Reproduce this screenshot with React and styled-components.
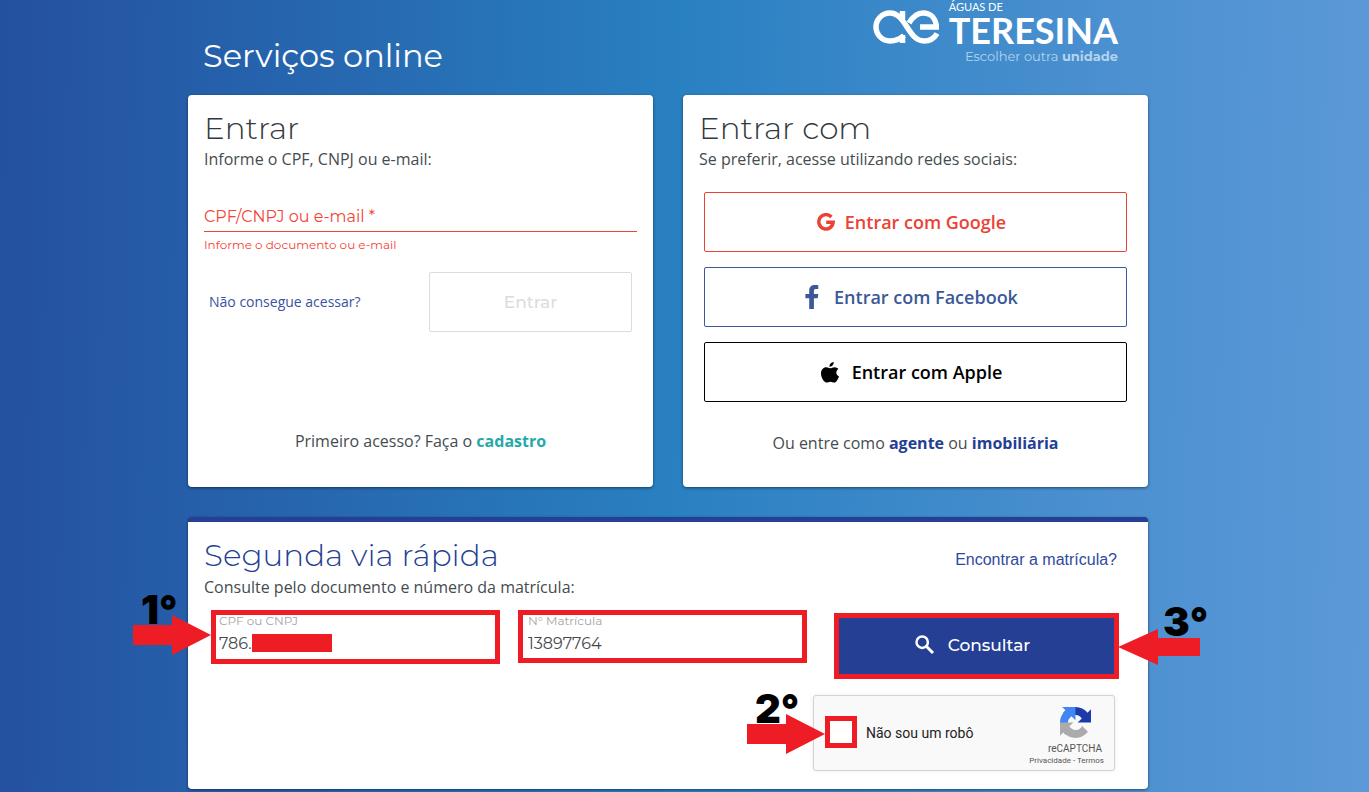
import React from 'react';
import styled, { createGlobalStyle, css } from 'styled-components';

const Global = createGlobalStyle`
  * { box-sizing: border-box; }
  body { margin: 0; font-family: "Open Sans", sans-serif; color: #32393d; }
  a { text-decoration: none; }
  h1, h2, p { margin: 0; }
`;

const geometric = css`font-family: Montserrat, Inter, sans-serif;`;

const Page = styled.div`
  min-height: 100vh;
  padding-right: 33px;
  background: linear-gradient(91deg, #2450a0 0%, #2980c1 49%, #4b90d0 80%, #5c99d8 100%);
  overflow: hidden;
`;
const Content = styled.main`
  max-width: 960px;
  margin: 0 auto;
`;
const Header = styled.header`
  height: 95px;
  display: flex;
  justify-content: space-between;
  padding: 0 30px 0 15px;
`;
const PageTitle = styled.h1`
  ${geometric}
  font-weight: 400;
  font-size: 32px;
  line-height: 40px;
  padding-top: 36px;
  color: #fff;
`;
const Brand = styled.div`
  display: flex;
  flex-direction: column;
  align-items: flex-end;
  color: #fff;
`;
const BrandRow = styled.div`
  display: flex;
  gap: 10px;
  height: 48px;
`;
const BrandMark = styled.svg`
  width: 66px;
  height: 34px;
  margin-top: 10px;
`;
const BrandName = styled.div`
  font-family: Lato, sans-serif;
  font-size: 11px;
  line-height: 14px;
  strong {
    display: block;
    font-size: 36px;
    line-height: 32px;
  }
`;
const UnitLink = styled.a`
  ${geometric}
  font-size: 13px;
  line-height: 16px;
  color: #b4d3ee;
`;
const Columns = styled.div`
  display: grid;
  grid-template-columns: 1fr 1fr;
  gap: 30px;
  margin-bottom: 30px;
`;
const Card = styled.section`
  background: #fff;
  border-radius: 4px;
  padding: 16px;
  box-shadow: 0 1px 3px rgba(0, 0, 0, 0.5);
  display: flex;
  flex-direction: column;
`;
const LoginCard = styled(Card)`
  min-height: 392px;
`;
const QuickCard = styled(Card)`
  border-top: 5px solid #243f93;
  min-height: 272px;
  margin-bottom: 3px;
`;
const CardTitle = styled.h2`
  ${geometric}
  font-weight: 300;
  font-size: 31px;
  line-height: 34px;
  padding-bottom: 2px;
  color: ${(p) => p.$color || '#32393d'};
`;
const Lead = styled.p`
  font-size: 16px;
  line-height: ${(p) => p.$line || 24}px;
  color: #454c50;
`;
const ErrorInput = styled.input`
  ${geometric}
  display: block;
  width: 100%;
  height: 32px;
  margin-top: 29px;
  padding: 2px 0 0;
  border: 0;
  border-bottom: 1px solid #f44336;
  font-size: 16px;
  background: none;
  outline: 0;
  &::placeholder { color: #f44336; opacity: 1; }
`;
const ErrorText = styled.p`
  ${geometric}
  font-size: 12px;
  line-height: 16px;
  padding-top: 5px;
  color: #f44336;
`;
const LoginActions = styled.div`
  display: flex;
  justify-content: space-between;
  align-items: center;
  padding: 19px 5px 0;
`;
const HelpLink = styled.a`
  font-size: 14px;
  line-height: 18px;
  color: #3a539e;
`;
const Button = styled.button`
  display: flex;
  align-items: center;
  justify-content: center;
  height: 60px;
  border: 1px solid ${(p) => p.$color};
  border-radius: 2px;
  background: #fff;
  color: ${(p) => p.$color};
  font: 600 18px "Open Sans", sans-serif;
`;
const EnterButton = styled(Button)`
  ${geometric}
  width: 203px;
  font-weight: 500;
  font-size: 17px;
`;
const SocialList = styled.div`
  display: flex;
  flex-direction: column;
  gap: 15px;
  padding: 21px 5px 0;
`;
const SocialButton = styled(Button)`
  gap: ${(p) => p.$gap}px;
  padding: 0 14px 0 6px;
`;
const Footnote = styled(Lead)`
  text-align: center;
  margin-top: ${(p) => p.$top}px;
`;
const StrongLink = styled.a`
  font-weight: 700;
  color: ${(p) => p.$color};
`;
const QuickHead = styled.div`
  display: flex;
  justify-content: space-between;
  padding-right: 15px;
`;
const FindLink = styled.a`
  font: 16px/44px "Liberation Sans", sans-serif;
  color: #3049a0;
`;
const QuickForm = styled.form`
  display: grid;
  grid-template-columns: 289fr 289fr 294fr;
  column-gap: 18px;
  padding: 13px 13px 0 7px;
  align-items: start;
`;
const Field = styled.div`
  position: relative;
  border: 5px solid #ee1c25;
  height: ${(p) => p.$height}px;
  padding-left: ${(p) => p.$inset}px;
  margin-top: -3px;
`;
const FieldLabel = styled.label`
  ${geometric}
  display: block;
  font-size: 12px;
  line-height: 12px;
  color: #a3a5a7;
`;
const FieldInput = styled.input`
  ${geometric}
  display: block;
  width: 100%;
  height: 32px;
  padding: 0;
  border: 0;
  outline: 0;
  background: none;
  font-size: 16px;
  color: #44494c;
`;
const Redaction = styled.span`
  position: absolute;
  left: 36px;
  top: 19px;
  width: 80px;
  height: 18px;
  background: #ee1c25;
`;
const ConsultButton = styled(Button)`
  ${geometric}
  position: relative;
  height: 66px;
  margin-left: 9px;
  padding: 0 14px 2px 6px;
  border: 5px solid #ee1c25;
  border-radius: 0;
  background: #243f93;
  color: #fff;
  font-weight: 500;
  font-size: 17px;
  gap: 13px;
`;
const Captcha = styled.div`
  align-self: flex-end;
  position: relative;
  width: 302px;
  height: 76px;
  margin: 16px 17px 0 0;
  padding: 0 10px 0 11px;
  display: flex;
  align-items: center;
  gap: 9px;
  background: #f9f9f9;
  border: 1px solid #d3d3d3;
  border-radius: 3px;
  box-shadow: 0 0 4px rgba(0, 0, 0, 0.08);
  font-family: Roboto, sans-serif;
`;
const CaptchaBox = styled.input`
  appearance: none;
  width: 32px;
  height: 32px;
  margin: 0 0 2px;
  border: 5px solid #ee1c25;
  background: #fff;
`;
const CaptchaLabel = styled.label`
  flex: 1;
  font-size: 14px;
  color: #222;
`;
const CaptchaBadge = styled.div`
  display: flex;
  flex-direction: column;
  align-items: flex-end;
  padding-top: 7px;
  color: #555;
  font-size: 10px;
  line-height: 13px;
  svg { margin: 0 13px 4px 0; }
  span { margin-right: 2px; }
  small { font-size: 8px; line-height: 12px; }
  a { color: inherit; }
`;
const Marker = styled.div`
  position: absolute;
  width: ${(p) => p.$w}px;
  height: 60px;
  top: ${(p) => p.$top}px;
  ${(p) => p.$side}: -${(p) => p.$w + (p.$gap || 0)}px;
  pointer-events: none;
  svg { position: absolute; left: 0; top: 20px; }
`;
const MarkerText = styled.span`
  position: absolute;
  left: ${(p) => p.$x}px;
  top: 0;
  font: 900 40px/30px Inter, "Liberation Sans", sans-serif;
  color: #000;
`;

const GoogleIcon = () => (
  <svg width="18" height="18" viewBox="0 0 18 18" fill="none" stroke="currentColor" strokeWidth="3.4" aria-hidden="true">
    <path d="M14.4 4A7.200 7.200 0 1 0 16.200 9.200H9.200" />
  </svg>
);
const FacebookIcon = () => (
  <svg width="14" height="24" viewBox="0 0 14 24" fill="currentColor" aria-hidden="true">
    <path d="M4.2 24V13.2H.4V8.9h3.8V5.4C4.2 2 6.4 0 9.6 0c1.600 0 2.900.1 3.700.2v3.900h-2.300C9.300 4.100 8.900 5 8.900 6.200v2.700h4.400l-.6 4.300H8.900V24z" />
  </svg>
);
const AppleIcon = () => (
  <svg width="18" height="21" viewBox="0 0 18 21" fill="currentColor" aria-hidden="true">
    <path d="M12.700 0c.2 2.600-1.900 4.900-4.200 4.700C8.300 2.400 10.300.2 12.700 0zM17.400 7.100c-3 1.800-2.600 6.100.6 7.300-.9 2.600-2.800 6.200-4.800 6.200-1.500 0-1.900-.9-3.700-.9s-2.300.9-3.700.9C3.300 20.600 0 16 0 11.500 0 7.600 2.500 5.300 5.200 5.300c1.700 0 2.900 1 4 1s2.500-1.100 4.400-1.100c1.500 0 2.900.7 3.800 1.900z" />
  </svg>
);
const SearchIcon = () => (
  <svg width="20" height="20" viewBox="0 0 20 20" fill="none" stroke="currentColor" aria-hidden="true">
    <circle cx="7.200" cy="7.200" r="5.700" strokeWidth="2.500" />
    <path d="M11.500 11.500l6.500 6.500" strokeWidth="3" />
  </svg>
);
const swirl = 'M64 31.955a33.25 33.25 0 0 0-.022-1.374V4.595l-7.183 7.184C50.916 4.583 41.975 0 31.963 0 21.544 0 12.287 4.963 6.451 12.65l11.775 11.898a15.6 15.6 0 0 1 4.768-5.350c2.056-1.604 4.968-2.916 8.968-2.916.483 0 .856.056 1.130.163 4.956.391 9.250 3.126 11.780 7.094l-8.335 8.335z';
const RecaptchaIcon = () => (
  <svg width="31" height="31" viewBox="0 0 64 64" aria-hidden="true">
    <path fill="#1c3aa9" d={swirl} />
    <path fill="#4285f4" d={swirl} transform="rotate(-90 32 32)" />
    <path fill="#ababab" d={swirl} transform="rotate(180 32 32)" />
  </svg>
);
const Logo = () => (
  <BrandMark viewBox="0 0 66 34" fill="none" stroke="#fff" strokeWidth="5.500" aria-hidden="true">
    <path d="M31 25.500C27 29 22 31 17 31A14 14 0 0 1 17 3C33 3 35 31 51 31C57 31 61.500 28 64 23.500" />
    <path d="M29.500 1V9M29.500 25V33" />
    <path d="M36 13C40 6.500 44 3 50 3C58 3 63 8.500 63.500 17H47" />
  </BrandMark>
);
const Arrow = ({ width, left }) => (
  <svg width={width} height="40" viewBox={`0 0 ${width} 40`} fill="#ee1c25" aria-hidden="true">
    {left
      ? <path d={`M0 20L40 2v9h${width - 40}v18H40v9z`} />
      : <path d={`M0 10h39V0l${width - 39} 20-${width - 39} 20V30H0z`} />}
  </svg>
);

export default function App() {
  return (
    <Page>
      <Global />
      <Content>
        <Header>
          <PageTitle>Serviços online</PageTitle>
          <Brand>
            <BrandRow>
              <Logo />
              <BrandName>ÁGUAS DE<strong>TERESINA</strong></BrandName>
            </BrandRow>
            <UnitLink href="#unidade">Escolher outra <b>unidade</b></UnitLink>
          </Brand>
        </Header>
        <Columns>
          <LoginCard>
            <CardTitle>Entrar</CardTitle>
            <Lead>Informe o CPF, CNPJ ou e-mail:</Lead>
            <ErrorInput aria-label="CPF/CNPJ ou e-mail" placeholder="CPF/CNPJ ou e-mail *" />
            <ErrorText>Informe o documento ou e-mail</ErrorText>
            <LoginActions>
              <HelpLink href="#ajuda">Não consegue acessar?</HelpLink>
              <EnterButton $color="#dadddf" disabled>Entrar</EnterButton>
            </LoginActions>
            <Footnote $top={97}>Primeiro acesso? Faça o <StrongLink $color="#27a9a9" href="#cadastro">cadastro</StrongLink></Footnote>
          </LoginCard>
          <LoginCard>
            <CardTitle>Entrar com</CardTitle>
            <Lead>Se preferir, acesse utilizando redes sociais:</Lead>
            <SocialList>
              <SocialButton $color="#ea4335" $gap={10}><GoogleIcon />Entrar com Google</SocialButton>
              <SocialButton $color="#3b5998" $gap={15}><FacebookIcon />Entrar com Facebook</SocialButton>
              <SocialButton $color="#000" $gap={13}><AppleIcon />Entrar com Apple</SocialButton>
            </SocialList>
            <Footnote $top={29}>Ou entre como <StrongLink $color="#243f93" href="#agente">agente</StrongLink> ou <StrongLink $color="#243f93" href="#imobiliaria">imobiliária</StrongLink></Footnote>
          </LoginCard>
        </Columns>
        <QuickCard>
          <QuickHead>
            <div>
              <CardTitle $color="#243f93">Segunda via rápida</CardTitle>
              <Lead $line={26}>Consulte pelo documento e número da matrícula:</Lead>
            </div>
            <FindLink href="#matricula">Encontrar a matrícula?</FindLink>
          </QuickHead>
          <QuickForm>
            <Field $height={54} $inset={3}>
              <FieldLabel htmlFor="doc">CPF ou CNPJ</FieldLabel>
              <FieldInput id="doc" defaultValue="786." />
              <Redaction />
              <Marker $side="left" $w={83} $top={-20}>
                <MarkerText $x={8}>1°</MarkerText>
                <Arrow width={78} />
              </Marker>
            </Field>
            <Field $height={53} $inset={5}>
              <FieldLabel htmlFor="matricula">N° Matrícula</FieldLabel>
              <FieldInput id="matricula" defaultValue="13897764" />
            </Field>
            <ConsultButton type="button">
              <SearchIcon />Consultar
              <Marker $side="right" $w={82} $gap={4} $top={-11}>
                <MarkerText $x={45}>3°</MarkerText>
                <Arrow width={82} left />
              </Marker>
            </ConsultButton>
          </QuickForm>
          <Captcha>
            <CaptchaBox type="checkbox" id="robot" />
            <CaptchaLabel htmlFor="robot">Não sou um robô</CaptchaLabel>
            <CaptchaBadge>
              <RecaptchaIcon />
              <span>reCAPTCHA</span>
              <small><a href="#privacidade">Privacidade</a> - <a href="#termos">Termos</a></small>
            </CaptchaBadge>
            <Marker $side="left" $w={67} $top={-2}>
              <MarkerText $x={8}>2°</MarkerText>
              <Arrow width={78} />
            </Marker>
          </Captcha>
        </QuickCard>
      </Content>
    </Page>
  );
}
